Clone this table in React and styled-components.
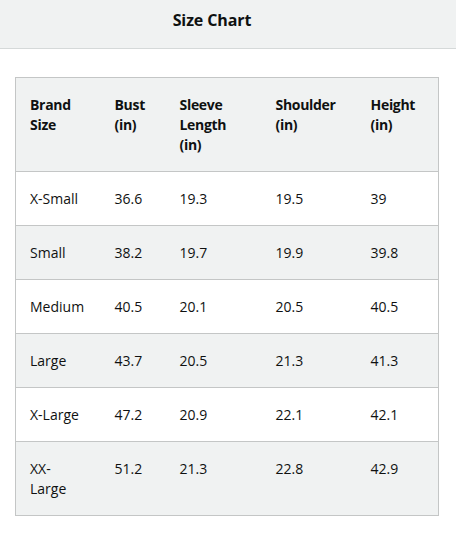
import React from 'react'
import styled, { createGlobalStyle } from 'styled-components'

const GlobalStyle = createGlobalStyle`
body {
  margin: 0;
  background: #fff;
  font-family: "Open Sans", "Noto Sans", Arial, sans-serif;
  color: #0f1111;
}
`

const columns = [
    { label: 'Brand Size', width: 85 },
    { label: 'Bust (in)', width: 65 },
    { label: 'Sleeve Length (in)', width: 96 },
    { label: 'Shoulder (in)', width: 95 },
    { label: 'Height (in)', width: 82 },
]

const rows = [
    ['X-Small', '36.6', '19.3', '19.5', '39'],
    ['Small', '38.2', '19.7', '19.9', '39.8'],
    ['Medium', '40.5', '20.1', '20.5', '40.5'],
    ['Large', '43.7', '20.5', '21.3', '41.3'],
    ['X-Large', '47.2', '20.9', '22.1', '42.1'],
    ['XX-Large', '51.2', '21.3', '22.8', '42.9'],
]

const App = () => {
    return (
        <Page>
            <GlobalStyle />
            <Header>
                <Title>Size Chart</Title>
            </Header>
            <Body>
                <Table>
                    <colgroup>
                        {columns.map((c) => (
                            <col key={c.label} style={{ width: c.width }} />
                        ))}
                    </colgroup>
                    <thead>
                        <Row shaded>
                            {columns.map((c) => (
                                <HeadCell key={c.label}>{c.label}</HeadCell>
                            ))}
                        </Row>
                    </thead>
                    <tbody>
                        {rows.map((r, i) => (
                            <Row key={r[0]} shaded={i % 2 === 1}>
                                {r.map((v, j) => (
                                    <Cell key={j}>{v}</Cell>
                                ))}
                            </Row>
                        ))}
                    </tbody>
                </Table>
            </Body>
        </Page>
    )
}

const Page = styled.div`
width: 456px;
min-height: 533px;
`

const Header = styled.div`
background: #f0f2f2;
border-bottom: 1px solid #d5d9d9;
height: 49px;
box-sizing: border-box;
padding: 10px 32px 0 0;
text-align: center;
`

const Title = styled.h4`
margin: 0;
font-size: 16px;
line-height: 20px;
font-weight: 700;
letter-spacing: -0.1px;
`

const Body = styled.div`
padding: 28px 15px 0;
`

const Table = styled.table`
width: 423px;
border-collapse: collapse;
table-layout: fixed;
border: 1px solid #c4c6c6;
font-size: 14px;
line-height: 20px;
`

const Row = styled.tr.withConfig({ shouldForwardProp: (p) => p !== 'shaded' })`
background: ${(p) => (p.shaded ? '#f0f2f2' : '#fff')};
border-bottom: 1px solid #c4c6c6;
`

const HeadCell = styled.th`
text-align: left;
vertical-align: top;
font-weight: 700;
letter-spacing: -0.3px;
padding: 17px 14px 16px;
`

const Cell = styled.td`
text-align: left;
vertical-align: top;
padding: 17px 14px 16px;
`

export default App
